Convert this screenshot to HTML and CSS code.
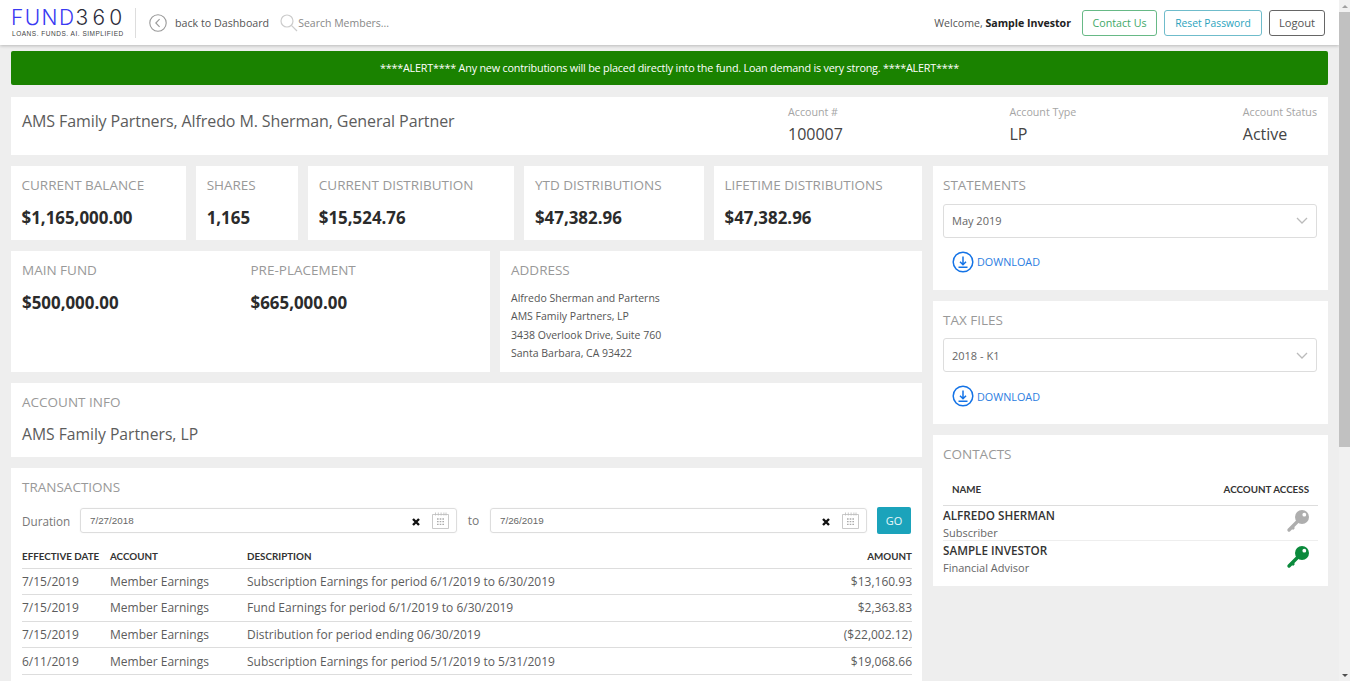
FILE: index.html
```html
<!DOCTYPE html>
<html lang="en">
<head>
<meta charset="utf-8">
<title>Fund360</title>
<link rel="stylesheet" href="styles.css">
</head>
<body>
<div class="page">
  <header class="topbar">
    <div class="logo">
      <div class="logo-mark"><span class="logo-fund">FUND</span><span class="logo-num">360</span></div>
      <div class="logo-tag">LOANS. FUNDS. AI. SIMPLIFIED</div>
    </div>
    <a class="back">
      <svg class="back-icon" viewBox="0 0 18 18"><circle cx="9" cy="9" r="8.2"/><path d="M10.6 5.2 6.8 9l3.8 3.8"/></svg>
      <span>back to Dashboard</span>
    </a>
    <div class="search">
      <svg class="search-icon" viewBox="0 0 18 18"><circle cx="7" cy="7" r="6"/><path d="M11.4 11.4 17 17"/></svg>
      <span>Search Members...</span>
    </div>
    <div class="user">
      <span class="welcome">Welcome, <b>Sample Investor</b></span>
      <a class="btn btn-green">Contact Us</a>
      <a class="btn btn-teal">Reset Password</a>
      <a class="btn btn-gray">Logout</a>
    </div>
  </header>

  <main class="main">
    <div class="alert">****ALERT**** Any new contributions will be placed directly into the fund. Loan demand is very strong. ****ALERT****</div>

    <section class="card account">
      <h1 class="account-name">AMS Family Partners, Alfredo M. Sherman, General Partner</h1>
      <div class="account-meta">
        <div><div class="meta-label">Account #</div><div class="meta-value">100007</div></div>
        <div><div class="meta-label">Account Type</div><div class="meta-value">LP</div></div>
        <div><div class="meta-label">Account Status</div><div class="meta-value">Active</div></div>
      </div>
    </section>

    <div class="columns">
      <div class="col-left">
        <div class="stats">
          <div class="card stat"><div class="label">CURRENT BALANCE</div><div class="value">$1,165,000.00</div></div>
          <div class="card stat"><div class="label">SHARES</div><div class="value">1,165</div></div>
          <div class="card stat"><div class="label">CURRENT DISTRIBUTION</div><div class="value">$15,524.76</div></div>
          <div class="card stat"><div class="label">YTD DISTRIBUTIONS</div><div class="value">$47,382.96</div></div>
          <div class="card stat"><div class="label">LIFETIME DISTRIBUTIONS</div><div class="value">$47,382.96</div></div>
        </div>

        <div class="funds-row">
          <div class="card funds">
            <div><div class="label">MAIN FUND</div><div class="value">$500,000.00</div></div>
            <div><div class="label">PRE-PLACEMENT</div><div class="value">$665,000.00</div></div>
          </div>
          <div class="card address">
            <div class="label">ADDRESS</div>
            <div class="address-lines">
              <div>Alfredo Sherman and Parterns</div>
              <div>AMS Family Partners, LP</div>
              <div>3438 Overlook Drive, Suite 760</div>
              <div>Santa Barbara, CA 93422</div>
            </div>
          </div>
        </div>

        <section class="card info">
          <div class="label">ACCOUNT INFO</div>
          <div class="info-name">AMS Family Partners, LP</div>
        </section>

        <section class="card transactions">
          <div class="label">TRANSACTIONS</div>
          <div class="duration">
            <span class="duration-label">Duration</span>
            <div class="date-input">
              <span class="date-text">7/27/2018</span>
              <svg class="clear-icon" viewBox="0 0 8 8"><path d="M1 1l6 6M7 1 1 7"/></svg>
              <svg class="cal-icon" viewBox="0 0 17 17"><path d="M.5 2.5h16v14H.5zM3.5 .5v3M6.3 .5v3M9.1 .5v3M11.9 .5v3M14 .5v3"/><path class="cal-dots" d="M5 7h1.6M7.7 7h1.6M10.4 7h1.6M5 9.7h1.6M7.7 9.7h1.6M10.4 9.7h1.6M5 12.4h1.6M7.7 12.4h1.6M10.4 12.4h1.6"/></svg>
            </div>
            <span class="duration-to">to</span>
            <div class="date-input">
              <span class="date-text">7/26/2019</span>
              <svg class="clear-icon" viewBox="0 0 8 8"><path d="M1 1l6 6M7 1 1 7"/></svg>
              <svg class="cal-icon" viewBox="0 0 17 17"><path d="M.5 2.5h16v14H.5zM3.5 .5v3M6.3 .5v3M9.1 .5v3M11.9 .5v3M14 .5v3"/><path class="cal-dots" d="M5 7h1.6M7.7 7h1.6M10.4 7h1.6M5 9.7h1.6M7.7 9.7h1.6M10.4 9.7h1.6M5 12.4h1.6M7.7 12.4h1.6M10.4 12.4h1.6"/></svg>
            </div>
            <button class="go">GO</button>
          </div>
          <table class="tx-table">
            <thead>
              <tr><th class="c-date">EFFECTIVE DATE</th><th class="c-acct">ACCOUNT</th><th>DESCRIPTION</th><th class="c-amt">AMOUNT</th></tr>
            </thead>
            <tbody>
              <tr><td>7/15/2019</td><td>Member Earnings</td><td>Subscription Earnings for period 6/1/2019 to 6/30/2019</td><td class="c-amt">$13,160.93</td></tr>
              <tr><td>7/15/2019</td><td>Member Earnings</td><td>Fund Earnings for period 6/1/2019 to 6/30/2019</td><td class="c-amt">$2,363.83</td></tr>
              <tr><td>7/15/2019</td><td>Member Earnings</td><td>Distribution for period ending 06/30/2019</td><td class="c-amt">($22,002.12)</td></tr>
              <tr><td>6/11/2019</td><td>Member Earnings</td><td>Subscription Earnings for period 5/1/2019 to 5/31/2019</td><td class="c-amt">$19,068.66</td></tr>
            </tbody>
          </table>
        </section>
      </div>

      <aside class="col-right">
        <section class="card file-card">
          <div class="label">STATEMENTS</div>
          <div class="select"><span>May 2019</span><svg class="chev" viewBox="0 0 12 7"><path d="M1 1l5 5 5-5"/></svg></div>
          <a class="download">
            <svg class="dl-icon" viewBox="0 0 22 22"><circle cx="11" cy="11" r="9.8"/><path d="M11 5.5v8M8 10.8l3 3 3-3M6.5 16.2h9"/></svg>
            <span>DOWNLOAD</span>
          </a>
        </section>
        <section class="card file-card">
          <div class="label">TAX FILES</div>
          <div class="select"><span>2018 - K1</span><svg class="chev" viewBox="0 0 12 7"><path d="M1 1l5 5 5-5"/></svg></div>
          <a class="download">
            <svg class="dl-icon" viewBox="0 0 22 22"><circle cx="11" cy="11" r="9.8"/><path d="M11 5.5v8M8 10.8l3 3 3-3M6.5 16.2h9"/></svg>
            <span>DOWNLOAD</span>
          </a>
        </section>
        <section class="card contacts">
          <div class="label">CONTACTS</div>
          <div class="contacts-head"><span>NAME</span><span>ACCOUNT ACCESS</span></div>
          <div class="contact">
            <div class="contact-text"><div class="contact-name">ALFREDO SHERMAN</div><div class="contact-role">Subscriber</div></div>
            <svg class="key key-off" viewBox="0 0 24 24"><path class="key-shaft" d="M11.5 12.5 3 21"/><path class="key-tooth" d="M6 18l2 2"/><circle class="key-head" cx="16" cy="8" r="7"/><circle class="key-hole" cx="18.3" cy="5.7" r="1.9"/></svg>
          </div>
          <div class="contact">
            <div class="contact-text"><div class="contact-name">SAMPLE INVESTOR</div><div class="contact-role">Financial Advisor</div></div>
            <svg class="key key-on" viewBox="0 0 24 24"><path class="key-shaft" d="M11.5 12.5 3 21"/><path class="key-tooth" d="M6 18l2 2"/><circle class="key-head" cx="16" cy="8" r="7"/><circle class="key-hole" cx="18.3" cy="5.7" r="1.9"/></svg>
          </div>
        </section>
      </aside>
    </div>
  </main>
</div>
<div class="scrollbar">
  <div class="arrow-up"></div>
  <div class="thumb"></div>
  <div class="arrow-down"></div>
</div>
</body>
</html>
```

FILE: styles.css
```css
* { box-sizing: border-box; }
html, body { height: 100%; }
body {
  margin: 0;
  display: flex;
  overflow: hidden;
  background: #eeeeee;
  color: #555;
  font-family: "Open Sans", "Liberation Sans", sans-serif;
  font-size: 12px;
}
.page { flex: 1; min-width: 0; height: 100vh; overflow: hidden; }

/* scrollbar */
.scrollbar {
  width: 11px;
  height: 100vh;
  background: #f1f1f1;
  display: flex;
  flex-direction: column;
  align-items: center;
  flex: none;
}
.arrow-up, .arrow-down { width: 0; height: 0; border-left: 3px solid transparent; border-right: 3px solid transparent; flex: none; }
.arrow-up { border-bottom: 3px solid #a0a0a0; margin: 5px 0 4px; }
.thumb { width: 100%; height: 435px; background: #c1c1c1; flex: none; }
.arrow-down { border-top: 3px solid #505050; margin-top: auto; margin-bottom: 4px; }

/* top bar */
.topbar {
  height: 45px;
  background: #fff;
  box-shadow: 0 1px 3px rgba(0,0,0,.22);
  display: flex;
  align-items: center;
  padding: 0 14px 0 12px;
  position: relative;
}
.logo {
  width: 124px;
  height: 30px;
  border-right: 1px solid #ddd;
  flex: none;
}
.logo-mark { font-family: "Inter", "Lato", sans-serif; font-weight: 300; font-size: 21px; line-height: 20px; margin-left: -1px; white-space: nowrap; }
.logo-fund { color: #3a3af2; letter-spacing: 1.4px; }
.logo-num { color: #2c2c3a; letter-spacing: 4.2px; }
.logo-tag { font-family: "Liberation Sans", sans-serif; font-size: 6.5px; letter-spacing: .52px; line-height: 8px; margin-top: 2px; color: #444; white-space: nowrap; }
.back { display: flex; align-items: center; margin-left: 13px; gap: 8px; color: #555; font-size: 10.7px; }
.back-icon { width: 18px; height: 18px; fill: none; stroke: #999; stroke-width: 1.1; }
.search { display: flex; align-items: center; margin-left: 11px; color: #888; font-size: 10.5px; }
.search-icon { width: 18px; height: 18px; fill: none; stroke: #ccc; stroke-width: 1.2; margin-top: 1px; }
.user { margin-left: auto; display: flex; align-items: center; }
.welcome { font-size: 10.6px; color: #555; margin-right: 11px; }
.welcome b { color: #222; font-weight: 700; }
.btn { height: 26px; display: flex; align-items: center; justify-content: center; border: 1px solid; border-radius: 3px; margin-left: 7px; }
.btn-green { width: 75px; margin-left: 0; font-size: 10.7px; color: #3ea868; border-color: #67b986; }
.btn-teal { width: 98px; font-size: 10.3px; color: #2aa3bd; border-color: #6fbccb; }
.btn-gray { width: 56px; font-size: 11.2px; color: #555; border-color: #666; }

/* main */
.main { padding: 6px 11px 0; }
.alert {
  height: 34px;
  background: #1a8200;
  color: #fff;
  border-radius: 2px;
  display: flex;
  align-items: center;
  justify-content: center;
  font-size: 10.8px;
  letter-spacing: -.2px;
  padding-bottom: 2px;
  margin-bottom: 12px;
}
.card { background: #fff; }
.label { font-size: 13.5px; line-height: 20px; color: #999; }

.account { height: 58px; display: flex; padding: 0 11px; margin-bottom: 11px; }
.account-name { margin: 14px 0 0; font-size: 16px; letter-spacing: -.1px; line-height: 20px; font-weight: 400; color: #5c5c5c; }
.account-meta { margin-left: auto; width: 529px; display: flex; justify-content: space-between; padding-top: 7px; }
.meta-label { font-size: 10.7px; line-height: 16px; color: #a5a5a5; }
.meta-value { font-size: 16px; line-height: 22px; margin-top: 3px; color: #444; }

.columns { display: grid; grid-template-columns: 911px 395px; column-gap: 11px; align-items: start; }
.col-left, .col-right { display: flex; flex-direction: column; gap: 11px; }

.stats { display: grid; grid-template-columns: 175fr 102fr 206fr 179.5fr 208fr; column-gap: 10.2px; }
.stat { height: 74px; padding: 9px 10.5px; }
.value { font-size: 16.9px; line-height: 24px; font-weight: 700; color: #2b2b2b; margin-top: 11px; }

.funds-row { display: grid; grid-template-columns: 479px 1fr; column-gap: 10px; }
.funds { height: 121px; display: grid; grid-template-columns: 1fr 1fr; padding: 9px 11px; }
.address { padding: 9px 11px; }
.address-lines { font-size: 10.5px; line-height: 18.3px; color: #555; margin-top: 9px; }

.info { height: 74px; padding: 9px 11px; }
.info-name { font-size: 15.7px; line-height: 22px; color: #5c5c5c; margin-top: 11px; }

.transactions { padding: 9px 10px 20px 11px; }
.duration { display: flex; align-items: center; height: 27px; margin-top: 10px; }
.duration-label { font-size: 11.7px; color: #777; width: 58px; flex: none; }
.duration-to { font-size: 12px; color: #777; width: 33px; text-align: center; flex: none; }
.date-input {
  width: 377px;
  height: 25px;
  border: 1px solid #ddd;
  border-radius: 3px;
  display: flex;
  align-items: center;
  padding: 0 7px 0 9px;
  flex: none;
  box-shadow: 0 0 2px rgba(0,0,0,.05);
}
.date-text { font-family: "Liberation Sans", sans-serif; font-size: 9.8px; color: #666; flex: 1; }
.clear-icon { width: 8px; height: 8px; fill: none; stroke: #111; stroke-width: 2.4; margin-right: 12px; margin-top: 2px; }
.cal-icon { width: 17px; height: 17px; fill: none; stroke: #bbb; stroke-width: .8; }
.cal-dots { stroke: #aaa; stroke-width: 1.3; }
.go { width: 34px; height: 27px; margin-left: 10px; border: 0; border-radius: 2px; background: #1ba3bb; color: #e9f7fa; font-family: inherit; font-size: 11px; padding: 0; }

.tx-table { width: 100%; border-collapse: collapse; table-layout: fixed; margin-top: 10px; }
.tx-table th {
  font-family: "Lato", sans-serif;
  font-weight: 700;
  font-size: 9.8px;
  color: #333;
  text-align: left;
  padding: 0;
  height: 24px;
  border-bottom: 1px solid #ddd;
}
.tx-table td { height: 26.67px; padding: 0; font-size: 12px; color: #5c5c5c; border-bottom: 1px solid #ddd; white-space: nowrap; }
.c-date { width: 88px; }
.c-acct { width: 137px; }
.tx-table .c-amt { text-align: right; width: 140px; }

/* right */
.file-card { height: 123.5px; padding: 9px 11px 0 10px; }
.select {
  height: 34px;
  margin-top: 8.9px;
  border: 1px solid #ddd;
  border-radius: 3px;
  display: flex;
  align-items: center;
  justify-content: space-between;
  padding: 0 8px 0 8px;
  font-size: 11px;
  color: #666;
}
.chev { width: 12px; height: 7px; fill: none; stroke: #bbb; stroke-width: 1.3; }
.download { display: flex; align-items: center; gap: 3px; margin: 13px 0 0 9px; color: #2a7de1; font-size: 10.8px; }
.dl-icon { width: 22px; height: 22px; fill: none; stroke: #1473e6; stroke-width: 1.5; }

.contacts { padding: 9px 10px 10px; height: 151px; }
.contacts-head {
  display: flex;
  justify-content: space-between;
  font-family: "Lato", sans-serif;
  font-weight: 700;
  font-size: 9.8px;
  color: #333;
  height: 31px;
  margin-top: 11px;
  padding: 0 9px;
  border-bottom: 1px solid #ddd;
  line-height: 28px;
}
.contact { height: 35px; display: flex; justify-content: space-between; align-items: center; padding-right: 8px; border-bottom: 1px solid #eee; }
.contact:last-child { border-bottom: 0; }
.contact-text { margin-top: 2px; }
.contact-name { font-size: 11.7px; line-height: 17px; font-weight: 600; color: #333; }
.contact-role { font-size: 11px; line-height: 18px; color: #666; }
.key { width: 24px; height: 24px; margin-top: -4px; }
.key-shaft, .key-tooth { fill: none; stroke-width: 3.4; stroke-linecap: round; }
.key-tooth { stroke-width: 2.6; stroke-linecap: butt; }
.key-hole { fill: #fff; }
.key-off .key-shaft, .key-off .key-tooth { stroke: #aeaeae; }
.key-off .key-head { fill: #aeaeae; }
.key-on .key-shaft, .key-on .key-tooth { stroke: #0b8a3c; }
.key-on .key-head { fill: #0b8a3c; }
```
